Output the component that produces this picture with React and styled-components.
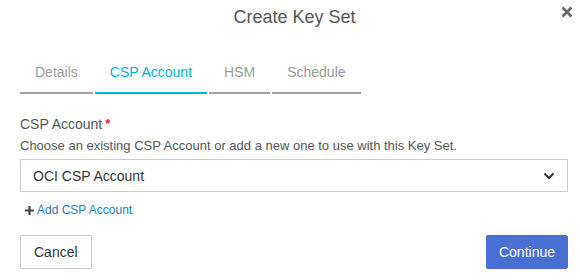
import React, { useState } from 'react'
import styled, { createGlobalStyle } from 'styled-components'

const GlobalStyle = createGlobalStyle`
  body {
    margin: 0;
    background: #fff;
    font-family: "Liberation Sans", Arial, sans-serif;
  }
`

const Modal = styled.div`
  width: 580px;
  height: 280px;
  box-sizing: border-box;
  padding: 0 12px 0 20px;
  background: #fff;
  overflow: hidden;
`

const Header = styled.div`
  display: flex;
  align-items: flex-start;
  height: 34px;
  margin-right: -8px;
`

const Title = styled.h1`
  flex: 1;
  margin: 0;
  padding-left: 10px;
  text-align: center;
  font-size: 18px;
  font-weight: 400;
  line-height: 34px;
  color: #555;
`

const Close = styled.button`
  width: 16px;
  height: 24px;
  padding: 0;
  margin-right: 1px;
  border: 0;
  background: transparent;
  display: flex;
  align-items: center;
  justify-content: center;
  cursor: pointer;
`

const Tabs = styled.div`
  display: flex;
  gap: 2px;
  margin-top: 28px;
`

const Tab = styled.div`
  padding: 0 15px 10px;
  font-size: 14px;
  line-height: 20px;
  color: ${p => (p.active ? '#00b3d7' : '#9a9a9a')};
  border-bottom: 2px solid ${p => (p.active ? '#00b3d7' : '#a3a3a3')};
  cursor: pointer;
`

const Label = styled.div`
  margin-top: 20px;
  font-size: 14px;
  line-height: 20px;
  color: #555;
`

const Required = styled.span`
  color: #e8222a;
  font-size: 13px;
  font-weight: 700;
  margin-left: 3px;
  vertical-align: 1px;
`

const Help = styled.div`
  margin-top: 2px;
  font-size: 13px;
  line-height: 19px;
  color: #555;
`

const Select = styled.div`
  margin-top: 4px;
  height: 33px;
  box-sizing: border-box;
  border: 1px solid #ccc;
  display: flex;
  align-items: center;
  justify-content: space-between;
  padding: 0 12px;
  font-size: 14px;
  color: #333;
`

const AddLink = styled.a`
  display: flex;
  align-items: center;
  gap: 3px;
  margin: 10px 0 0 5px;
  font-size: 12px;
  line-height: 16px;
  color: #2a78bf;
  text-decoration: none;
  cursor: pointer;
`

const Footer = styled.div`
  display: flex;
  justify-content: space-between;
  margin-top: 17px;
`

const Button = styled.button`
  height: 34px;
  padding: 0 ${p => (p.primary ? '12px' : '13px')};
  border: 1px solid ${p => (p.primary ? '#4a6fd3' : '#ccc')};
  border-radius: 2px;
  background: ${p => (p.primary ? '#4a6fd3' : '#fff')};
  color: ${p => (p.primary ? '#fff' : '#333')};
  font-family: "Liberation Sans", Arial, sans-serif;
  font-size: 14px;
  cursor: pointer;
`

const tabs = ['Details', 'CSP Account', 'HSM', 'Schedule']

const App = () => {
  const [active, setActive] = useState(1)
  return (
    <Modal>
      <GlobalStyle />
      <Header>
        <Title>Create Key Set</Title>
        <Close aria-label="close">
          <svg width="12" height="12" viewBox="0 0 12 12">
            <path d="M1.5 1.5 L10.5 10.5 M10.5 1.5 L1.5 10.5" stroke="#666" strokeWidth="2.6" />
          </svg>
        </Close>
      </Header>
      <Tabs>
        {tabs.map((t, i) => (
          <Tab key={t} active={i === active} onClick={() => setActive(i)}>
            {t}
          </Tab>
        ))}
      </Tabs>
      <Label>
        CSP Account<Required>*</Required>
      </Label>
      <Help>Choose an existing CSP Account or add a new one to use with this Key Set.</Help>
      <Select>
        <span>OCI CSP Account</span>
        <svg width="12" height="8" viewBox="0 0 12 8">
          <path d="M1.5 1.5 L6 6 L10.5 1.5" fill="none" stroke="#333" strokeWidth="2" />
        </svg>
      </Select>
      <AddLink>
        <svg width="9" height="9" viewBox="0 0 9 9">
          <path d="M4.5 0 V9 M0 4.5 H9" stroke="#444" strokeWidth="2.2" />
        </svg>
        Add CSP Account
      </AddLink>
      <Footer>
        <Button>Cancel</Button>
        <Button primary>Continue</Button>
      </Footer>
    </Modal>
  )
}

export default App
